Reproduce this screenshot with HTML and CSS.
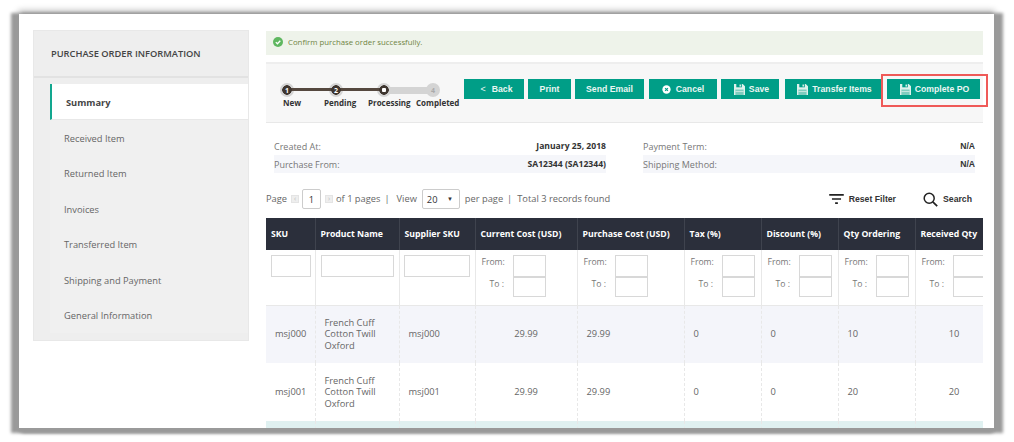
FILE: index.html
```html
<!DOCTYPE html>
<html lang="en">
<head>
<meta charset="utf-8">
<title>Purchase Order</title>
<link rel="stylesheet" href="styles.css">
</head>
<body>
<svg class="defs" width="0" height="0" aria-hidden="true">
  <symbol id="floppy" viewBox="0 0 12 12">
    <path fill="#dff1ec" d="M0 0h9.5L12 2.5V12H0z"/>
    <rect x="2.5" y="0" width="6" height="3.6" fill="#009e87"/>
    <rect x="6" y="0.6" width="1.6" height="2.2" fill="#dff1ec"/>
    <rect x="1.5" y="6" width="9" height="6" fill="#7fcdbf"/>
    <rect x="1.5" y="7.8" width="9" height=".8" fill="#dff1ec"/>
  </symbol>
</svg>
<div class="frame">
  <aside class="side">
    <h2 class="side-title">PURCHASE ORDER INFORMATION</h2>
    <nav class="side-nav">
      <a class="nav-item active">Summary</a>
      <a class="nav-item">Received Item</a>
      <a class="nav-item">Returned Item</a>
      <a class="nav-item">Invoices</a>
      <a class="nav-item">Transferred Item</a>
      <a class="nav-item">Shipping and Payment</a>
      <a class="nav-item">General Information</a>
    </nav>
  </aside>
  <main class="main">
    <div class="alert">
      <svg class="alert-icon" viewBox="0 0 10 10"><circle cx="5" cy="5" r="5" fill="#5fb760"/><path d="M2.8 5.1l1.6 1.6 2.9-3" fill="none" stroke="#fff" stroke-width="1.3"/></svg>
      <span>Confirm purchase order successfully.</span>
    </div>
    <div class="toolbar">
      <div class="steps">
        <div class="track">
          <span class="ring s1"></span>
          <span class="ring s2"></span>
          <span class="ring s3"></span>
          <span class="ring s4"></span>
          <span class="track-base"></span>
          <span class="track-done"></span>
          <span class="dot done s1">1</span>
          <span class="dot done s2">2</span>
          <span class="dot current s3"></span>
          <span class="dot todo s4">4</span>
        </div>
        <div class="step-labels">
          <span class="l1">New</span><span class="l2">Pending</span><span class="l3">Processing</span><span class="l4">Completed</span>
        </div>
      </div>
      <div class="actions">
        <button class="btn b-back"><span class="chev">&lt;</span>Back</button>
        <button class="btn b-print">Print</button>
        <button class="btn b-mail">Send Email</button>
        <button class="btn b-cancel"><svg class="ic-cancel" viewBox="0 0 10 10"><circle cx="5" cy="5" r="4.6" fill="#fff"/><path d="M3.4 3.4l3.2 3.2M6.6 3.4L3.4 6.6" stroke="#009e87" stroke-width="1.2"/></svg>Cancel</button>
        <button class="btn b-save"><svg class="ic-save"><use href="#floppy"/></svg>Save</button>
        <button class="btn b-transfer"><svg class="ic-save"><use href="#floppy"/></svg>Transfer Items</button>
        <button class="btn b-complete"><svg class="ic-save"><use href="#floppy"/></svg>Complete PO</button>
      </div>
    </div>
    <div class="info">
      <dl class="info-col">
        <div class="info-row"><dt>Created At:</dt><dd>January 25, 2018</dd></div>
        <div class="info-row alt"><dt>Purchase From:</dt><dd>SA12344 (SA12344)</dd></div>
      </dl>
      <dl class="info-col">
        <div class="info-row"><dt>Payment Term:</dt><dd class="arial">N/A</dd></div>
        <div class="info-row alt"><dt>Shipping Method:</dt><dd class="arial">N/A</dd></div>
      </dl>
    </div>
    <div class="pager">
      <div class="pager-left">
        <span class="pg-page">Page</span>
        <span class="pg-arrow">‹</span>
        <span class="pg-input">1</span>
        <span class="pg-arrow">›</span>
        <span class="pg-of">of 1 pages</span>
        <span class="sep">|</span>
        <span class="pg-view">View</span>
        <span class="pg-select"><span>20</span><span class="caret">▼</span></span>
        <span class="pg-per">per page</span>
        <span class="sep">|</span>
        <span class="total">Total 3 records found</span>
      </div>
      <div class="pager-right">
        <span class="tool"><svg class="ic-filter" viewBox="0 0 16 11"><path d="M0 1h16M3 5.5h10M6.5 10h3" stroke="#222" stroke-width="1.8"/></svg>Reset Filter</span>
        <span class="tool"><svg class="ic-search" viewBox="0 0 15 15"><circle cx="6.2" cy="6.2" r="5" fill="none" stroke="#222" stroke-width="1.5"/><path d="M9.8 9.8l4.4 4.4" stroke="#222" stroke-width="1.7"/></svg>Search</span>
      </div>
    </div>
    <div class="table-wrap">
      <table class="grid">
        <colgroup>
          <col class="c1"><col class="c2"><col class="c3"><col class="c4"><col class="c5"><col class="c6"><col class="c7"><col class="c8"><col class="c9">
        </colgroup>
        <thead>
          <tr>
            <th>SKU</th><th>Product Name</th><th>Supplier SKU</th><th>Current Cost (USD)</th><th>Purchase Cost (USD)</th><th>Tax (%)</th><th>Discount (%)</th><th>Qty Ordering</th><th>Received Qty</th>
          </tr>
        </thead>
        <tbody>
          <tr class="filter">
            <td><span class="fbox w40"></span></td>
            <td><span class="fbox w73"></span></td>
            <td><span class="fbox w66"></span></td>
            <td class="rc"><div class="range"><span class="r-l">From:</span><span class="fbox w33"></span><span class="r-l to">To :</span><span class="fbox w33 h20"></span></div></td>
            <td class="rc"><div class="range"><span class="r-l">From:</span><span class="fbox w33"></span><span class="r-l to">To :</span><span class="fbox w33 h20"></span></div></td>
            <td class="rc"><div class="range"><span class="r-l">From:</span><span class="fbox w33"></span><span class="r-l to">To :</span><span class="fbox w33 h20"></span></div></td>
            <td class="rc"><div class="range"><span class="r-l">From:</span><span class="fbox w33"></span><span class="r-l to">To :</span><span class="fbox w33 h20"></span></div></td>
            <td class="rc"><div class="range"><span class="r-l">From:</span><span class="fbox w33"></span><span class="r-l to">To :</span><span class="fbox w33 h20"></span></div></td>
            <td class="rc"><div class="range"><span class="r-l">From:</span><span class="fbox w33"></span><span class="r-l to">To :</span><span class="fbox w33 h20"></span></div></td>
          </tr>
          <tr class="row odd">
            <td>msj000</td><td class="name">French Cuff<br>Cotton Twill<br>Oxford</td><td class="sup">msj000</td><td class="ctr">29.99</td><td class="pc">29.99</td><td>0</td><td>0</td><td>10</td><td class="ctr">10</td>
          </tr>
          <tr class="row">
            <td>msj001</td><td class="name">French Cuff<br>Cotton Twill<br>Oxford</td><td class="sup">msj001</td><td class="ctr">29.99</td><td class="pc">29.99</td><td>0</td><td>0</td><td>20</td><td class="ctr">20</td>
          </tr>
          <tr class="row sel">
            <td></td><td></td><td></td><td></td><td></td><td></td><td></td><td></td><td></td>
          </tr>
        </tbody>
      </table>
    </div>
  </main>
</div>
</body>
</html>
```
FILE: styles.css
```css
* { box-sizing: border-box; }
html, body { margin: 0; padding: 0; background: #fff; height: 100%; overflow: hidden; }
body { padding: 14px 20px 14px 19px; font-family: "Open Sans", sans-serif; font-size: 9.3px; color: #666; }
.defs { position: absolute; }

.frame {
  width: 975px;
  height: 414px;
  background: #fff;
  display: flex;
  align-items: flex-start;
  gap: 17px;
  padding: 16px 11px 0 14px;
  overflow: hidden;
  box-shadow: -5px 2px 3px 3px #9a9a9a, 6px 2px 3px 3px #9a9a9a, 0 -3px 6px 1px #c8c8c8, 0 3px 3px 1px #a8a8a8;
}

/* Sidebar */
.side { width: 216px; flex: none; background: #eee; border: 1px solid #e8e8e8; height: 311px; }
.side-title { margin: 0; height: 47px; border-bottom: 2px solid #e2e2e2; display: flex; align-items: center; padding-left: 17px; font-size: 9.3px; font-weight: 600; color: #444; }
.side-nav { margin: 6px 0 0 16px; display: flex; flex-direction: column; }
.nav-item { height: 35.5px; display: flex; align-items: center; padding: 1px 0 0 14px; font-size: 9.3px; color: #666; background: #f0f0f0; }
.nav-item.active { height: 36px; background: #fff; border-left: 2px solid #12a78f; padding-left: 14px; font-weight: 700; color: #444; border-bottom: 1px solid #e8e8e8; }

/* Main */
.main { width: 717px; flex: none; }
.alert { height: 24px; margin-top: 1px; background: #eef3ea; display: flex; align-items: center; gap: 5px; padding: 0 0 2px 7px; font-size: 7.8px; color: #6e8443; }
.alert-icon { width: 10px; height: 10px; }

.toolbar { height: 61px; margin-top: 7px; background: #f7f7f7; border-top: 2px solid #eee; border-bottom: 1px solid #e8e8e8; display: flex; padding-top: 15px; }

.steps { width: 198px; flex: none; padding-left: 14px; padding-top: 4px; }
.track { position: relative; height: 14px; width: 160px; }
.ring { position: absolute; top: 0; width: 14px; height: 14px; border-radius: 50%; background: #d4d4d4; }
.track-base { position: absolute; left: 104px; top: 3.5px; width: 48px; height: 7px; background: #d4d4d4; }
.track-done { position: absolute; left: 7px; top: 5px; width: 97px; height: 3px; background: #55483f; }
.dot { position: absolute; top: 0; width: 14px; height: 14px; border-radius: 50%; display: flex; align-items: center; justify-content: center; font-size: 7px; font-weight: 700; line-height: 1; }
.dot.done { color: #fff; background: radial-gradient(circle, #3f3630 0 4.5px, transparent 5px); }
.dot.current { background: radial-gradient(circle, #fff 0 2px, #3f3630 2.5px 4.5px, transparent 5px); }
.dot.todo { color: #aaa; }
.s1 { left: 0; }
.s2 { left: 49px; }
.s3 { left: 97px; }
.s4 { left: 146px; }
.step-labels { position: relative; height: 12px; font-size: 8px; font-weight: 700; color: #333; white-space: nowrap; }
.step-labels span { position: absolute; top: 0; }
.l1 { left: 3px; }
.l2 { left: 44px; }
.l3 { left: 88px; }
.l4 { left: 136px; }

.actions { display: flex; gap: 5px; align-items: flex-start; }
.btn { height: 20px; border: 0; padding: 0; background: #009e87; color: #eaf6f3; font-family: "Liberation Sans", sans-serif; font-size: 8.7px; font-weight: 700; display: flex; align-items: center; justify-content: center; gap: 4px; }
.b-back { width: 60px; gap: 6px; padding-left: 5px; }
.b-print { width: 43px; margin-left: -1px; }
.b-mail { width: 69px; margin-left: -1px; }
.b-cancel { width: 68px; }
.b-save { width: 58px; margin-left: -1px; padding-left: 3px; }
.b-transfer { width: 97px; margin-left: 1px; padding-left: 2px; }
.b-complete { width: 93px; position: relative; padding-left: 2px; }
.b-complete::after { content: ""; position: absolute; inset: -5px -8px -8px -6px; border: 2px solid #ef5a58; }
.chev { font-size: 9px; font-weight: 400; }
.ic-cancel { width: 9px; height: 9px; margin-right: 1px; }
.ic-save { width: 11px; height: 11px; }

/* Info */
.info { display: flex; gap: 37px; padding: 14px 8px 0; }
.info-col { margin: 0; width: 332px; }
.info-row { height: 18px; display: flex; justify-content: space-between; align-items: center; }
.info-row.alt { background: #f5f6fa; }
.info-row dt { font-size: 9px; color: #777; }
.info-row dd { margin: 0; font-size: 8.6px; font-weight: 700; color: #333; }
.info-row dd.arial { font-family: "Liberation Sans", sans-serif; }

/* Pager */
.pager { height: 20px; margin-top: 16px; display: flex; justify-content: space-between; align-items: center; font-size: 9.3px; color: #666; }
.pager-left { display: flex; align-items: center; white-space: nowrap; }
.pg-page { width: 25px; padding-bottom: 1px; }
.pg-arrow { width: 8px; height: 8px; background: #eee; color: #bbb; border: 1px solid #e4e4e4; font-size: 7px; line-height: 6px; text-align: center; }
.pg-input { width: 19px; height: 20px; margin: 0 4px 0 3px; border: 1px solid #ccc; border-radius: 2px; display: flex; align-items: center; justify-content: center; color: #333; background: #fff; }
.pg-of { margin-left: 3px; padding-bottom: 1px; }
.pg-view, .pg-per, .total, .sep { padding-bottom: 1px; }
.pg-select { width: 38px; height: 20px; margin: 0 5px; border: 1px solid #ccc; border-radius: 2px; display: flex; align-items: center; justify-content: space-between; padding: 0 6px 0 4px; color: #333; background: #fff; }
.caret { font-size: 6px; }
.sep { margin: 0 7px 0 4px; }
.total { margin-left: -2px; }
.pager-right { display: flex; gap: 27px; padding-right: 11px; font-family: "Liberation Sans", sans-serif; font-size: 8.7px; font-weight: 700; color: #333; }
.tool { display: flex; align-items: center; gap: 5px; }
.ic-filter { width: 15px; height: 10px; }
.ic-search { width: 15px; height: 15px; }

/* Table */
.table-wrap { margin-top: 9px; width: 717px; overflow: hidden; }
.grid { table-layout: fixed; width: 727px; border-collapse: collapse; font-size: 9.3px; }
.c1 { width: 49px; }
.c2 { width: 84px; }
.c3 { width: 76px; }
.c4 { width: 102px; }
.c5 { width: 107px; }
.c6 { width: 77px; }
.c7 { width: 77px; }
.c8 { width: 77px; }
.c9 { width: 78px; }
.grid th { height: 32px; background: #2b2f3b; color: #fff; font-size: 8.7px; font-weight: 700; text-align: left; padding: 0 0 0 5px; border-right: 1px solid #3f434e; white-space: nowrap; }
.grid td { padding: 0 0 0 9px; border-right: 1px dashed #e8e8e8; vertical-align: middle; color: #666; }
.grid .filter td { height: 55px; vertical-align: top; padding: 5px 0 0 5px; border-right: 1px solid #e8e8e8; border-bottom: 1px solid #e8e8e8; }
.grid .filter td.rc { padding-left: 6px; }
.fbox { display: block; height: 22px; border: 1px solid #d8d8d8; background: #fff; }
.w40 { width: 40px; }
.w73 { width: 73px; }
.w66 { width: 66px; margin-left: -1px; }
.w33 { width: 33px; }
.h20 { height: 20px; }
.range { display: grid; grid-template-columns: 31px 33px; font-size: 8.6px; }
.r-l { padding-top: 1px; line-height: 12px; color: #777; }
.r-l.to { padding-left: 8px; padding-top: 1px; }
.row td { height: 58px; line-height: 11.6px; }
.odd td { background: #f4f5fa; }
.sel td { background: #e0f1f1; height: 20px; }
.grid td.ctr { text-align: center; padding-left: 0; }
```
